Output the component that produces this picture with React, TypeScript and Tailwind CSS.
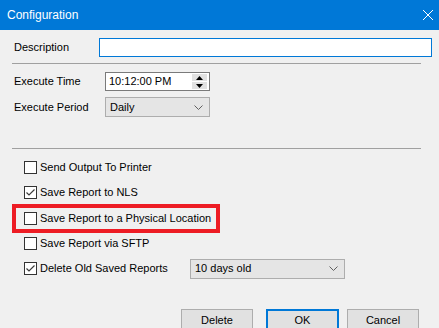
const font = { fontFamily: '"Liberation Sans", Arial, sans-serif' };

const Box = ({ checked }: { checked?: boolean }) => (
  <span className="w-[13px] h-[13px] border border-[#333333] bg-white flex items-center justify-center shrink-0">
    {checked && (
      <svg width="11" height="11" viewBox="0 0 11 11">
        <path d="M1.5 5.5 L4 8 L9.5 2.5" fill="none" stroke="#3b3b3b" strokeWidth="1.2" />
      </svg>
    )}
  </span>
);

const Check = ({ label, checked, className = '' }: { label: string; checked?: boolean; className?: string }) => (
  <div className={`flex items-center gap-[3px] h-[13px] ${className}`}>
    <Box checked={checked} />
    <span className="text-[11px] text-black leading-none">{label}</span>
  </div>
);

const Select = ({ value, className }: { value: string; className: string }) => (
  <div className={`flex items-center justify-between bg-[#e5e5e5] border border-[#adadad] pl-[4px] pr-[6px] ${className}`}>
    <span className="text-[11px] text-black leading-none">{value}</span>
    <svg width="9" height="5" viewBox="0 0 9 5">
      <path d="M0.5 0.5 L4.5 4.5 L8.5 0.5" fill="none" stroke="#606060" strokeWidth="1" />
    </svg>
  </div>
);

export default function App() {
  return (
    <div className="w-[439px] h-[328px] bg-[#f0f0f0] overflow-hidden relative" style={font}>
      <div className="h-[30px] bg-[#0078d7] flex items-center justify-between pl-[7px] pr-[5px] text-white">
        <span className="text-[12px]">Configuration</span>
        <svg width="12" height="12" viewBox="0 0 12 12">
          <path d="M1 1 L11 11 M11 1 L1 11" stroke="white" strokeWidth="1" />
        </svg>
      </div>

      <div className="pl-[12px]">
        <div className="flex items-center mt-[8px] h-[19px]">
          <span className="w-[87px] pl-[2px] text-[11px] text-black">Description</span>
          <div className="w-[333px] h-[19px] bg-white border border-[#0078d7]" />
        </div>

        <div className="mt-[6px] w-[409px] h-px bg-[#a0a0a0]" />

        <div className="flex items-center mt-[8px] h-[19px]">
          <span className="w-[93px] pl-[2px] text-[11px] text-black">Execute Time</span>
          <div className="w-[105px] h-[19px] bg-white border border-[#7a7a7a] flex items-center justify-between pl-[3px] pr-[2px]">
            <span className="text-[11px] leading-none">10:12:00 PM</span>
            <div className="w-[15px] h-[15px] flex flex-col gap-px">
              <div className="flex-1 bg-[#e1e1e1] flex items-center justify-center">
                <svg width="7" height="4" viewBox="0 0 7 4"><path d="M0 4 L3.5 0 L7 4 Z" fill="#000" /></svg>
              </div>
              <div className="flex-1 bg-[#e1e1e1] flex items-center justify-center">
                <svg width="7" height="4" viewBox="0 0 7 4"><path d="M0 0 L3.5 4 L7 0 Z" fill="#000" /></svg>
              </div>
            </div>
          </div>
        </div>

        <div className="flex items-center mt-[6px] h-[20px]">
          <span className="w-[93px] pl-[2px] text-[11px] text-black">Execute Period</span>
          <Select value="Daily" className="w-[105px] h-[20px]" />
        </div>

        <div className="mt-[31px] w-[409px] h-px bg-[#a0a0a0]" />

        <div className="pl-[12px]">
          <Check label="Send Output To Printer" className="mt-[12px]" />
          <Check label="Save Report to NLS" checked className="mt-[12px]" />
          <div className="relative mt-[13px]">
            <Check label="Save Report to a Physical Location" />
            <div className="absolute left-[-12px] top-[-8px] w-[208px] h-[29px] border-[4px] border-[#ed1c24]" />
          </div>
          <Check label="Save Report via SFTP" className="mt-[12px]" />
          <div className="flex items-center mt-[12px] h-[13px]">
            <div className="w-[166px]">
              <Check label="Delete Old Saved Reports" checked />
            </div>
            <Select value="10 days old" className="w-[155px] h-[20px]" />
          </div>
        </div>

        <div className="flex mt-[34px] pl-[169px]">
          <button className="w-[72px] h-[23px] bg-[#e1e1e1] border border-[#adadad] text-[11px] text-black">Delete</button>
          <button className="w-[73px] h-[23px] bg-[#e1e1e1] border-2 border-[#0078d7] text-[11px] text-black ml-[13px]">OK</button>
          <button className="w-[72px] h-[23px] bg-[#e1e1e1] border border-[#adadad] text-[11px] text-black ml-[8px]">Cancel</button>
        </div>
      </div>
    </div>
  );
}
